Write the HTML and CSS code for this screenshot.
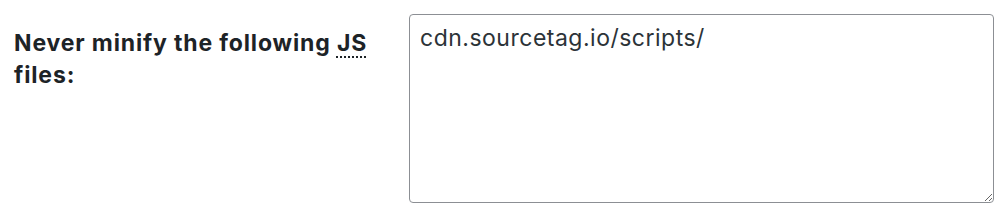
FILE: index.html
```html
<!DOCTYPE html>
<html lang="en">
<head>
    <meta charset="UTF-8">
    <meta name="viewport" content="width=device-width, initial-scale=1.0">
    <title>Settings</title>
    <link rel="stylesheet" href="styles.css">
</head>
<body>
    <div class="form-row">
        <label class="row-label" for="exclude-js">Never minify the following <abbr title="JavaScript">JS</abbr> files:</label>
        <div class="row-field">
            <textarea id="exclude-js" class="code-list">cdn.sourcetag.io/scripts/</textarea>
        </div>
    </div>
</body>
</html>
```

FILE: styles.css
```css
body {
    font-family: Inter, "Noto Sans", sans-serif;
    margin: 0;
    padding: 0;
    background: #fff;
    color: #1d2327;
}

.form-row {
    display: flex;
    padding: 14px 14px 15px 14px;
}

.row-label {
    width: 380px;
    padding-top: 13px;
    font-size: 23px;
    font-weight: 700;
    line-height: 32px;
    letter-spacing: 0.85px;
}

.row-label abbr {
    text-decoration: underline dotted;
    text-underline-offset: 5px;
    text-decoration-thickness: 2px;
}

.row-field {
    margin-left: auto;
}

.code-list {
    display: block;
    box-sizing: border-box;
    width: 585px;
    height: 189px;
    margin: 0;
    padding: 9px 10px;
    font-family: Inter, "Noto Sans", sans-serif;
    font-size: 23px;
    line-height: 28px;
    letter-spacing: 0.5px;
    color: #2c3338;
    background: #fff;
    border: 1px solid #8c8f94;
    border-radius: 4px;
    resize: both;
}
```
